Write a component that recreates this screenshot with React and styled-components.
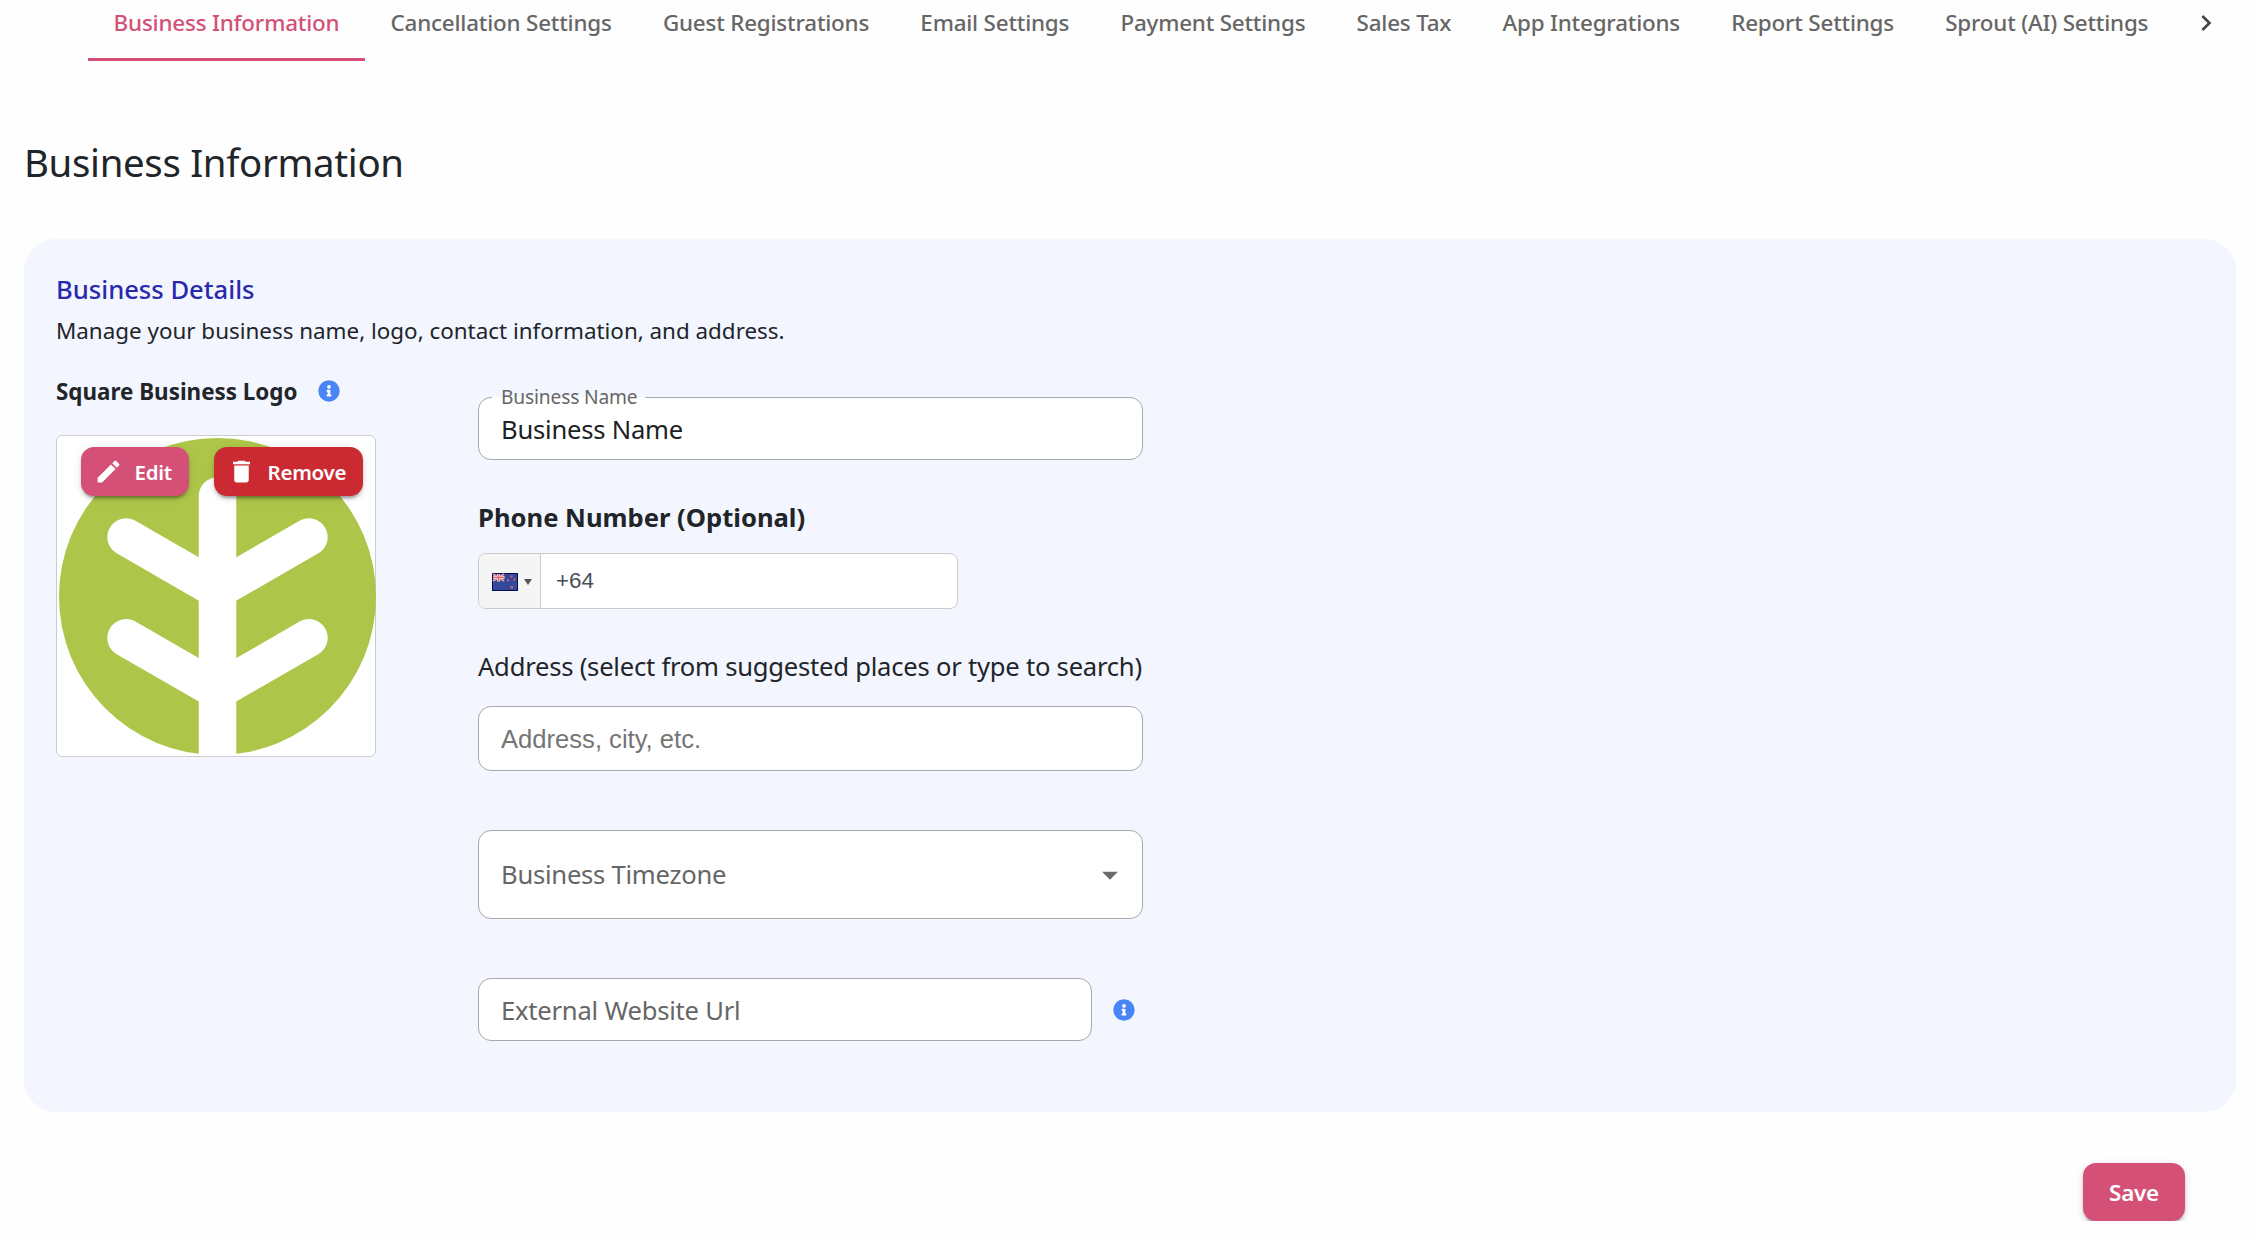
import React, { useState } from 'react';
import styled, { createGlobalStyle } from 'styled-components';
import { MdEdit, MdDelete, MdKeyboardArrowRight, MdArrowDropDown } from 'react-icons/md';
import { FaInfoCircle } from 'react-icons/fa';

const GlobalStyle = createGlobalStyle`
  * {
    box-sizing: border-box;
  }

  body {
    margin: 0;
    background: #fefefe;
    color: #212529;
    font-family: "Noto Sans", sans-serif;
    overflow: hidden;
  }

  input, button {
    font-family: inherit;
  }
`;

const TabBar = styled.nav`
  display: flex;
  height: 61px;
  padding-left: 88px;
`;

const Tab = styled.button`
  height: 61px;
  padding: 0 25.6px 13px;
  border: 0;
  border-bottom: 3px solid ${props => props.$active ? "#d45077" : "transparent"};
  background: none;
  color: ${props => props.$active ? "#d45077" : "#666"};
  font-size: 22.4px;
  font-weight: 500;
  letter-spacing: -0.19px;
  line-height: 45px;
  white-space: nowrap;
  cursor: pointer;
`;

const ScrollButton = styled.button`
  display: flex;
  align-items: center;
  justify-content: center;
  width: 64px;
  height: 45px;
  padding: 0;
  border: 0;
  background: none;
  color: #444;
`;

const Title = styled.h1`
  margin: 75px 0 51px 24px;
  font-size: 38.4px;
  font-weight: 400;
  letter-spacing: -0.33px;
  line-height: 52px;
`;

const Card = styled.section`
  margin: 0 22px 0 24px;
  padding: 28px 32px 71px;
  border-radius: 32px;
  background: #f3f6ff;
`;

const CardTitle = styled.h2`
  margin: 0;
  color: #2929ae;
  font-size: 25.6px;
  font-weight: 500;
  line-height: 46px;
`;

const CardText = styled.p`
  margin: 0;
  font-size: 22.4px;
  line-height: 36px;
`;

const CardBody = styled.div`
  display: flex;
  gap: 102px;
`;

const LogoColumn = styled.div`
  width: 320px;
  padding-top: 25px;
`;

const LogoHeading = styled.div`
  display: flex;
  align-items: center;
  gap: 21px;
  height: 34px;
  margin-bottom: 27px;
  font-size: 22.4px;
  font-weight: 700;
  white-space: nowrap;
`;

const InfoIcon = styled(FaInfoCircle)`
  flex: none;
  width: 22px;
  height: 22px;
  border-radius: 50%;
  background: radial-gradient(#fff 55%, transparent 56%);
  color: #4a85f8;
`;

const LogoBox = styled.div`
  position: relative;
  width: 320px;
  height: 322px;
  padding: 1.5px 0 0 1.7px;
  border: 1px solid #ccc;
  border-radius: 6px;
  background: #fff;
`;

const LogoActions = styled.div`
  position: absolute;
  top: 11px;
  left: 24px;
  display: flex;
  gap: 25px;
`;

const Button = styled.button`
  display: flex;
  align-items: center;
  justify-content: center;
  border: 0;
  border-radius: 13px;
  background: ${props => props.$danger ? "#cc2a33" : "#d45077"};
  box-shadow: 0 5px 2px -3px rgba(0,0,0,0.2), 0 3px 3px 0 rgba(0,0,0,0.14), 0 2px 8px 0 rgba(0,0,0,0.12);
  color: #fff;
  font-weight: 600;
  letter-spacing: -0.25px;
  cursor: pointer;
`;

const LogoButton = styled(Button)`
  justify-content: flex-start;
  gap: 11.5px;
  width: ${props => props.$danger ? "149px" : "108px"};
  height: 49px;
  padding: 0 0 0 13px;
  font-size: 20.5px;

  svg {
    width: 29px;
    height: 29px;
  }
`;

const SaveButton = styled(Button)`
  width: 102px;
  height: 58px;
  font-size: 22.4px;
`;

const Footer = styled.footer`
  display: flex;
  justify-content: flex-end;
  padding: 51px 73px 0 0;
`;

const Form = styled.div`
  width: 665px;
  padding-top: 48px;
`;

const Field = styled.div`
  position: relative;
  display: flex;
  align-items: center;
  flex: 1;
  height: ${props => props.$height || 63}px;
  padding: 0 22px;
  border: 1px solid #a9a9ab;
  border-radius: 13px;
  background: #fff;
`;

const Label = styled.label`
  position: absolute;
  top: -15px;
  left: 13px;
  padding: 0 8px 0 9px;
  color: #666;
  font-size: 19.2px;
  letter-spacing: -0.17px;
  line-height: 27px;

  /* clears the border behind the label */
  &::before {
    content: "";
    position: absolute;
    z-index: 0;
    top: 14px;
    left: 0;
    width: 100%;
    height: 1px;
    background: #fff;
  }

  span {
    position: relative;
  }
`;

const Input = styled.input`
  width: 100%;
  padding: 2px 0 0;
  border: 0;
  outline: 0;
  background: none;
  color: #212121;
  font-size: 25.6px;
  letter-spacing: -0.23px;
  line-height: 36px;

  &::placeholder {
    color: #666;
    opacity: 1;
  }
`;

const AddressInput = styled(Input)`
  padding: 0;
  font-family: "Liberation Sans", Arial, sans-serif;
  letter-spacing: 0;

  &::placeholder {
    color: #757575;
  }
`;

const FieldHeading = styled.div`
  margin: ${props => props.$bold ? "39px 0 16px" : "39px 0 20px"};
  font-size: 25.6px;
  font-weight: ${props => props.$bold ? 700 : 400};
  letter-spacing: ${props => props.$bold ? "0" : "-0.23px"};
  line-height: 38px;
  white-space: nowrap;
`;

const PhoneField = styled.div`
  display: flex;
  width: 480px;
  height: 56px;
  border: 1px solid #cacaca;
  border-radius: 8px;
  background: #fff;
  overflow: hidden;
`;

const FlagButton = styled.div`
  display: flex;
  align-items: center;
  flex: none;
  gap: 6px;
  width: 62px;
  padding: 2px 0 0 13px;
  border-right: 1px solid #cacaca;
  background: #f5f5f5;
`;

const Caret = styled.span`
  border: 4px solid transparent;
  border-top: 6px solid #555;
  border-bottom: 0;
`;

const PhoneInput = styled(Input)`
  padding: 0 0 0 15px;
  color: #495057;
  font-family: "Liberation Sans", Arial, sans-serif;
  font-size: 22.4px;
  letter-spacing: 0;
`;

const Select = styled(Field)`
  justify-content: space-between;
  margin: 59px 0;
  padding-right: 13px;
  color: #666;
  font-size: 25.6px;
  letter-spacing: -0.25px;

  svg {
    width: 38px;
    height: 38px;
    color: #6b6b6b;
  }
`;

const UrlRow = styled.div`
  display: flex;
  align-items: center;
  gap: 21px;
  padding-right: 8px;
`;

const tabs = [
  'Business Information',
  'Cancellation Settings',
  'Guest Registrations',
  'Email Settings',
  'Payment Settings',
  'Sales Tax',
  'App Integrations',
  'Report Settings',
  'Sprout (AI) Settings',
];

const TreeLogo = () => (
  <svg width="317" height="317" viewBox="0 0 950 950" display="block">
    <circle cx="475" cy="475" r="475" fill="#adc64a" />
    <g fill="none" stroke="#fff" strokeWidth="112.5" strokeLinecap="round">
      <path d="M475 174V1010" />
      <path d="M201 297L475 455L749 297" />
      <path d="M201 599L475 757L749 599" />
    </g>
  </svg>
);

const Flag = () => (
  <svg width="26" height="18" viewBox="0 0 26 18">
    <rect width="26" height="18" fill="#060b55" />
    <rect x="1" y="1" width="24" height="16" fill="#34499a" />
    <path d="M1 1L12 8M12 1L1 8" stroke="#e3a4b0" strokeWidth="2" />
    <path d="M6.5 1V8.5M1 4.5H12.5" stroke="#f3d5da" strokeWidth="3" />
    <path d="M6.5 1V8.5M1 4.5H12.5" stroke="#e56a70" strokeWidth="1.5" />
    <g fill="#d8606c">
      <rect x="18.5" y="2.5" width="2" height="2" />
      <rect x="15" y="6.5" width="2" height="2" />
      <rect x="21.5" y="5.5" width="2" height="2" />
      <rect x="18.5" y="13" width="2.5" height="2.5" />
    </g>
  </svg>
);

const App = () => {
  const [active, setActive] = useState(0);
  const [name, setName] = useState('Business Name');
  const [phone, setPhone] = useState('+64');

  return (
    <>
      <GlobalStyle />
      <TabBar>
        {tabs.map((tab, i) => (
          <Tab key={tab} $active={i === active} onClick={() => setActive(i)}>{tab}</Tab>
        ))}
        <ScrollButton><MdKeyboardArrowRight size={32} /></ScrollButton>
      </TabBar>
      <Title>Business Information</Title>
      <Card>
        <CardTitle>Business Details</CardTitle>
        <CardText>Manage your business name, logo, contact information, and address.</CardText>
        <CardBody>
          <LogoColumn>
            <LogoHeading>Square Business Logo <InfoIcon /></LogoHeading>
            <LogoBox>
              <TreeLogo />
              <LogoActions>
                <LogoButton><MdEdit /> Edit</LogoButton>
                <LogoButton $danger><MdDelete /> Remove</LogoButton>
              </LogoActions>
            </LogoBox>
          </LogoColumn>
          <Form>
            <Field>
              <Label><span>Business Name</span></Label>
              <Input value={name} onChange={e => setName(e.target.value)} />
            </Field>
            <FieldHeading $bold>Phone Number (Optional)</FieldHeading>
            <PhoneField>
              <FlagButton><Flag /><Caret /></FlagButton>
              <PhoneInput value={phone} onChange={e => setPhone(e.target.value)} />
            </PhoneField>
            <FieldHeading>Address (select from suggested places or type to search)</FieldHeading>
            <Field $height={65}>
              <AddressInput placeholder="Address, city, etc." />
            </Field>
            <Select $height={89}>Business Timezone <MdArrowDropDown /></Select>
            <UrlRow>
              <Field><Input placeholder="External Website Url" /></Field>
              <InfoIcon />
            </UrlRow>
          </Form>
        </CardBody>
      </Card>
      <Footer>
        <SaveButton>Save</SaveButton>
      </Footer>
    </>
  );
};

export default App;
